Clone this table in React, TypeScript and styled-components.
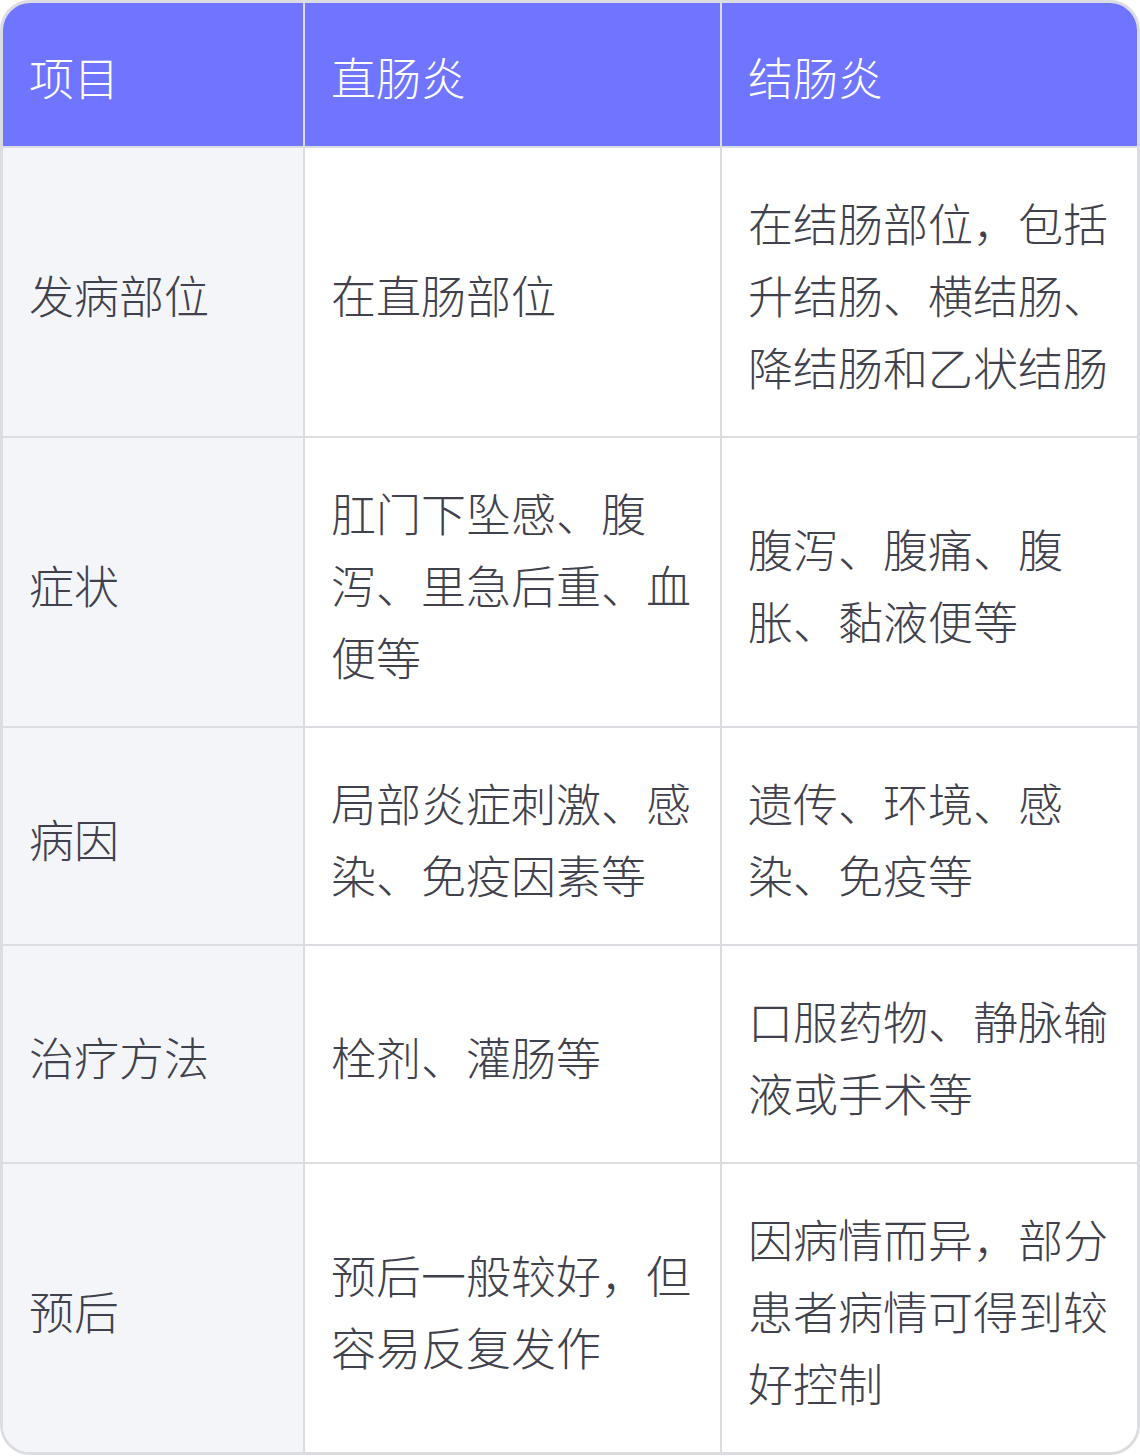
import styled, { createGlobalStyle } from 'styled-components'

const GlobalStyle = createGlobalStyle`
  html, body {
    margin: 0;
    padding: 0;
    background: #ffffff;
  }
  body {
    font-family: "Noto Sans CJK SC", "Noto Sans", sans-serif;
  }
`

type RowData = {
  item: string
  rectal: string
  colonic: string
}

const header: RowData = { item: '项目', rectal: '直肠炎', colonic: '结肠炎' }

const rows: RowData[] = [
  { item: '发病部位', rectal: '在直肠部位', colonic: '在结肠部位，包括升结肠、横结肠、降结肠和乙状结肠' },
  { item: '症状', rectal: '肛门下坠感、腹泻、里急后重、血便等', colonic: '腹泻、腹痛、腹胀、黏液便等' },
  { item: '病因', rectal: '局部炎症刺激、感染、免疫因素等', colonic: '遗传、环境、感染、免疫等' },
  { item: '治疗方法', rectal: '栓剂、灌肠等', colonic: '口服药物、静脉输液或手术等' },
  { item: '预后', rectal: '预后一般较好，但容易反复发作', colonic: '因病情而异，部分患者病情可得到较好控制' },
]

export default function App() {
  return (
    <>
      <GlobalStyle />
      <Table>
        <Row $head>
          <Cell $head>{header.item}</Cell>
          <Cell $head>{header.rectal}</Cell>
          <Cell $head $last>{header.colonic}</Cell>
        </Row>
        {rows.map((r, i) => (
          <Row key={r.item} $end={i === rows.length - 1}>
            <Cell $first>{r.item}</Cell>
            <Cell>{r.rectal}</Cell>
            <Cell $last>{r.colonic}</Cell>
          </Row>
        ))}
      </Table>
    </>
  )
}

const Table = styled.div`
  width: 1140px;
  box-sizing: border-box;
  border: 3px solid #dcdde2;
  border-radius: 30px;
  overflow: hidden;
  background: #ffffff;
`

const Row = styled.div<{ $head?: boolean; $end?: boolean }>`
  display: grid;
  grid-template-columns: 302px 417px 415px;
  border-bottom: ${p => (p.$end ? 'none' : '2px solid #dcdde2')};
  background: ${p => (p.$head ? '#7075ff' : '#ffffff')};
`

const Cell = styled.div<{ $head?: boolean; $first?: boolean; $last?: boolean }>`
  box-sizing: border-box;
  display: flex;
  align-items: center;
  padding: ${p => (p.$head ? '38px 26px 33px 26px' : '39px 26px 33px 26px')};
  border-right: ${p => (p.$last ? 'none' : '2px solid #dcdde2')};
  background: ${p => (p.$first ? '#f4f5f9' : 'transparent')};
  color: ${p => (p.$head ? '#ffffff' : '#3f414c')};
  font-size: 45px;
  line-height: 72px;
  font-weight: 300;
  word-break: break-all;
`
